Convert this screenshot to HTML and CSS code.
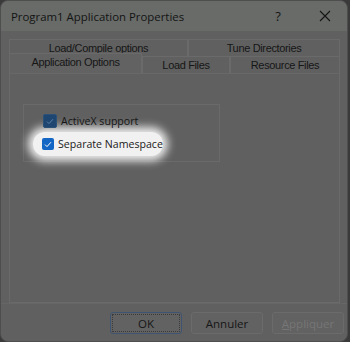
FILE: index.html
```html
<!DOCTYPE html>
<html>
<head>
<meta charset="utf-8">
<link rel="stylesheet" href="styles.css">
</head>
<body>
<div class="window">
  <div class="titlebar">
    <span class="title">Program1 Application Properties</span>
    <span class="help">?</span>
    <span class="close"><svg width="12" height="12" viewBox="0 0 12 12"><path d="M1 1 L11 11 M11 1 L1 11" stroke="#151515" stroke-width="1.1" fill="none"/></svg></span>
  </div>
  <div class="body">
    <div class="tabs">
      <div class="row back">
        <div class="tab t-load">Load/Compile options</div>
        <div class="tab t-tune">Tune Directories</div>
      </div>
      <div class="row front">
        <div class="tab t-app sel">Application Options</div>
        <div class="tab t-files">Load Files</div>
        <div class="tab t-res">Resource Files</div>
      </div>
    </div>
    <div class="panel">
      <div class="group">
        <label class="check dim"><span class="box"><svg width="8" height="7" viewBox="0 0 8 7"><path d="M1 3.6 L3 5.6 L7 1.2" stroke="#5a7fa5" stroke-width="1" fill="none"/></svg></span><span class="lbl">ActiveX support</span></label>
        <label class="check lit"><span class="glow"></span><span class="box"><svg width="8" height="7" viewBox="0 0 8 7"><path d="M1 3.6 L3 5.6 L7 1.2" stroke="#ffffff" stroke-width="1" fill="none"/></svg></span><span class="lbl">Separate Namespace</span></label>
      </div>
    </div>
  </div>
  <div class="footer">
    <div class="btn ok">OK</div>
    <div class="btn">Annuler</div>
    <div class="btn disabled"><u>A</u>ppliquer</div>
  </div>
</div>
</body>
</html>
```
FILE: styles.css
```css
html, body { margin: 0; padding: 0; background: #3a3a3a; }
body { width: 350px; height: 342px; overflow: hidden; }
.window {
  width: 346px; height: 340px;
  background: #606060;
  border: 1px solid #4e4e4e;
  border-radius: 8px;
  overflow: hidden;
  display: flex; flex-direction: column;
  font-family: "Liberation Sans", Arial, sans-serif;
  color: #161616;
}
.titlebar {
  height: 30px; flex: none;
  background: #686b68;
  display: flex; align-items: center;
  font-family: "Open Sans", "Noto Sans", sans-serif;
  font-size: 11.4px;
}
.title { padding-left: 10px; flex: 1; color: #141414; }
.help { width: 14px; text-align: center; margin-right: 34px; font-size: 13px; }
.close { width: 12px; height: 12px; margin-right: 16px; display: flex; }
.body { flex: 1; display: flex; flex-direction: column; padding: 8px 7px 0 8px; }
.tabs { display: flex; flex-direction: column; font-size: 11px; letter-spacing: -0.35px; }
.row { display: flex; height: 17px; }
.tab {
  display: flex; align-items: center; justify-content: center;
  border: 1px solid #6a6a6a; border-bottom: none;
  box-sizing: border-box;
}
.back .tab { height: 17px; }
.t-load { width: 179px; }
.t-tune { width: 152px; }
.front { height: 17px; align-items: flex-end; }
.front .tab { height: 17px; }
.t-app { width: 133px; }
.t-files { width: 88px; }
.t-res { width: 110px; }
.tab.sel { height: 20px; margin-top: -3px; background: #626262; position: relative; z-index: 1; align-items: flex-start; padding-top: 2px; }
.panel {
  width: 331px; height: 230px; box-sizing: border-box;
  border: 1px solid #6a6a6a; border-top-color: #686868;
  padding: 30px 0 0 13px;
}
.group {
  width: 197px; height: 58px; box-sizing: border-box;
  border: 1px solid #6a6a6a;
  padding: 9px 0 0 19px;
  display: flex; flex-direction: column; gap: 9px;
  font-family: "Open Sans", "Noto Sans", sans-serif; font-size: 10.6px;
}
.check { display: flex; align-items: center; height: 14px; position: relative; }
.box {
  width: 12px; height: 12px; border-radius: 2px; margin-right: 4px;
  display: flex; align-items: center; justify-content: center;
  position: relative; z-index: 1;
}
.lbl { position: relative; z-index: 1; }
.dim .box { background: #1f4670; border: 0.5px solid #2a5178; }
.lit { margin-left: -1px; }
.lit .box { background: #1466c4; }
.lit .lbl { color: #1b1b1b; }
.glow {
  position: absolute; left: -9px; top: -5px; width: 130px; height: 24px;
  background: #f1f1f1; border-radius: 12px;
  box-shadow: 0 0 9px 5px #ececec;
}
.footer {
  height: 38px; flex: none; box-sizing: border-box;
  border-top: 1px solid #666;
  display: flex; justify-content: flex-end; align-items: flex-start;
  padding: 8px 3px 0 0; gap: 9px;
  font-family: "Open Sans", "Noto Sans", sans-serif; font-size: 11.5px;
}
.btn {
  width: 72px; height: 22px; box-sizing: border-box;
  border: 1px solid #6b6b6b; border-radius: 3px;
  display: flex; align-items: center; justify-content: center;
  background: #626262;
}
.btn.ok { border: 1px solid #3e5470; outline: 1px dotted #3a3a3a; outline-offset: -3px; }
.btn.disabled { color: #767676; }
.btn u { text-decoration: underline; }
```
